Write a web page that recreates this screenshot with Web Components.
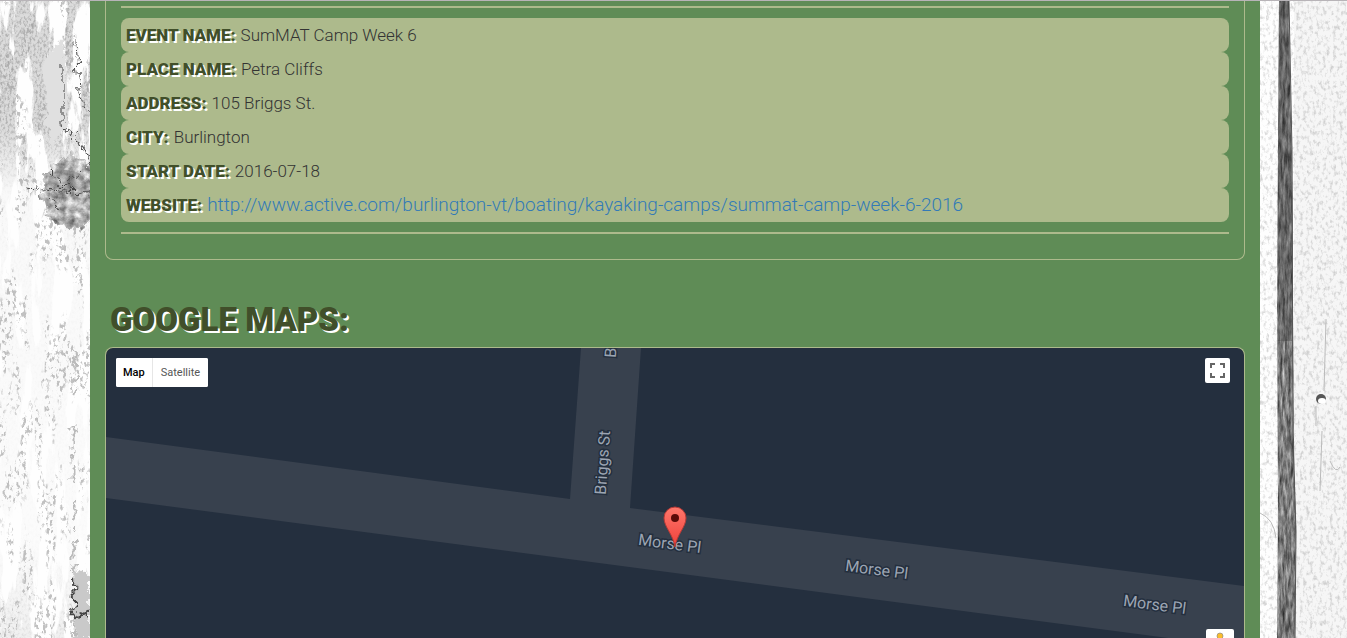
<!DOCTYPE html>
<html lang="en">
<head>
<meta charset="utf-8">
<title>SumMAT Camp Week 6</title>
<style>
html, body { margin: 0; height: 100%; overflow: hidden; }
body { font-family: Roboto, "Open Sans", sans-serif; color: #333; background: #fdfdfd; }
</style>
</head>
<body>
<camp-page>
  <event-details>
    <event-field label="Event Name:">SumMAT Camp Week 6</event-field>
    <event-field label="Place Name:">Petra Cliffs</event-field>
    <event-field label="Address:">105 Briggs St.</event-field>
    <event-field label="City:">Burlington</event-field>
    <event-field label="Start Date:">2016-07-18</event-field>
    <event-field label="Website:" href="http://www.active.com/burlington-vt/boating/kayaking-camps/summat-camp-week-6-2016"></event-field>
  </event-details>
  <section-title>Google Maps:</section-title>
  <street-map></street-map>
</camp-page>

<script>
const define = (name, html, setup) => {
  const template = document.createElement('template');
  template.innerHTML = html;
  customElements.define(name, class extends HTMLElement {
    constructor() {
      super();
      this.attachShadow({ mode: 'open' }).append(template.content.cloneNode(true));
    }
    connectedCallback() { if (setup) setup(this, this.shadowRoot); }
  });
};

define('wood-plank', `
<style>
:host { display: block; overflow: hidden; background: #fefefe; }
svg { display: block; width: 100%; height: 100%; }
:host([side="left"]) .right, :host([side="right"]) .left { display: none; }
</style>
<svg class="left" viewBox="0 0 90 638" preserveAspectRatio="xMinYMin slice" aria-hidden="true">
  <defs>
    <filter id="grain" x="0" y="0" width="100%" height="100%" color-interpolation-filters="sRGB">
      <feTurbulence type="fractalNoise" baseFrequency=".06 .012" numOctaves="6" seed="8" result="t"/>
      <feColorMatrix in="t" values="0 0 0 0 .86  0 0 0 0 .86  0 0 0 0 .86  0 16 0 0 -7.2" result="patch"/>
      <feTurbulence type="fractalNoise" baseFrequency=".5 .3" numOctaves="3" seed="2"/>
      <feColorMatrix values="0 0 0 0 .7  0 0 0 0 .7  0 0 0 0 .7  0 3 0 0 -1.3"/>
      <feComposite in2="patch" operator="atop"/>
    </filter>
    <filter id="flakes" x="0" y="0" width="100%" height="100%" color-interpolation-filters="sRGB">
      <feTurbulence type="fractalNoise" baseFrequency=".07 .015" numOctaves="3" seed="31"/>
      <feColorMatrix values="0 0 0 0 0  0 0 0 0 0  0 0 0 0 0  0 10 0 0 -4.9" result="area"/>
      <feTurbulence type="fractalNoise" baseFrequency=".3 .18" numOctaves="5" seed="21"/>
      <feColorMatrix values="0 0 0 0 .6  0 0 0 0 .6  0 0 0 0 .6  0 7 0 0 -3.7"/>
      <feComposite in2="area" operator="in"/>
    </filter>
    <filter id="rough" x="-20%" y="-20%" width="140%" height="140%">
      <feTurbulence type="fractalNoise" baseFrequency=".12" numOctaves="4" seed="3" result="n"/>
      <feDisplacementMap in="SourceGraphic" in2="n" scale="14" xChannelSelector="R" yChannelSelector="G"/>
    </filter>
    <filter id="knot" x="-20%" y="-20%" width="140%" height="140%" color-interpolation-filters="sRGB">
      <feTurbulence type="fractalNoise" baseFrequency=".12" numOctaves="5" seed="13" result="n"/>
      <feColorMatrix in="n" values="0 .9 0 0 .24  0 .9 0 0 .24  0 .9 0 0 .24  0 0 0 0 1" result="g"/>
      <feDisplacementMap in="SourceGraphic" in2="n" scale="16" xChannelSelector="R" yChannelSelector="G" result="d"/>
      <feComposite in="g" in2="d" operator="in"/>
    </filter>
    <linearGradient id="fade" x2="0" y2="1">
      <stop offset="0" stop-color="#fff"/><stop offset=".2" stop-color="#fff"/>
      <stop offset=".3" stop-color="#222"/><stop offset=".85" stop-color="#111"/><stop offset="1" stop-color="#666"/>
    </linearGradient>
    <mask id="m"><rect width="90" height="638" fill="url(#fade)"/></mask>
  </defs>
  <g mask="url(#m)"><rect width="90" height="638" filter="url(#grain)"/></g>
  <rect width="90" height="638" filter="url(#flakes)" opacity=".6"/>
  <g filter="url(#rough)">
    <path d="M44 60 60 40 66 60 68 125 52 145 46 120Z" fill="#e0e0e0"/>
    <path d="M74 565l16 12v61H76Z" fill="#c9c9c9"/>
  </g>
  <ellipse cx="72" cy="192" rx="30" ry="36" fill="#999" filter="url(#knot)"/>
  <ellipse cx="66" cy="180" rx="18" ry="11" fill="#666" opacity=".3"/>
  <g filter="url(#rough)" fill="none" stroke="#444">
    <path d="M30 186 60 190 90 191M50 170 65 186 80 172M50 195l8 14M62 62v60l8 14M76 40l3 50 11 26M76 130l14 34"/>
    <path d="M74 350l3 24-2 20M74 425v60M74 500v138" stroke="#bbb" stroke-width="3" stroke-dasharray="18 7 5 9"/>
    <path d="M73 580l2 40M76 616l10-4 4 3" stroke-width="2"/>
  </g>
</svg>
<svg class="right" viewBox="0 0 87 638" preserveAspectRatio="xMinYMin slice" aria-hidden="true">
  <defs>
    <filter id="speck" x="0" y="0" width="100%" height="100%" color-interpolation-filters="sRGB">
      <feTurbulence type="fractalNoise" baseFrequency=".3 .2" numOctaves="4" seed="5"/>
      <feColorMatrix values="0 0 0 0 .72  0 0 0 0 .72  0 0 0 0 .72  0 3 0 0 -1.45"/>
    </filter>
    <filter id="fibre" x="0" y="0" width="100%" height="100%" color-interpolation-filters="sRGB">
      <feTurbulence type="fractalNoise" baseFrequency=".35 .06" numOctaves="5" seed="9"/>
      <feColorMatrix values="0 .8 0 0 .08  0 .8 0 0 .08  0 .8 0 0 .08  0 0 0 0 1"/>
      <feComposite in2="SourceGraphic" operator="in"/>
    </filter>
  </defs>
  <rect x="34" width="53" height="638" fill="#f2f2f2" opacity=".7"/>
  <rect width="87" height="638" filter="url(#speck)" opacity=".6"/>
  <path d="M19 0H29L30 80 32 150 33 320 34 440 36 530 35 638H17L18 500 17 300 18 140Z" filter="url(#fibre)"/>
  <path d="M19 0H29L31 130 33 220 32 340H18L18 140Z" fill="#333" opacity=".3"/>
  <path d="M29 0 32 150 33 440 36 530 35 638" fill="none" stroke="#555"/>
  <path d="M66 318 64 390M56 405v20M62 430l-2 60M0 512q14 6 16 25M70 460q6 14 10 6" fill="none" stroke="#bbb"/>
  <circle cx="61" cy="398" r="5" fill="#555"/>
  <ellipse cx="62" cy="400" rx="4" ry="3" fill="#fff"/>
</svg>`);

define('camp-page', `
<style>
:host { display: grid; grid-template-columns: 90px minmax(0, 1fr) 87px; height: 100%; box-sizing: border-box; border-top: 1px solid #b8b4b8; }
main { display: flex; flex-direction: column; min-height: 0; padding: 0 15px; background: #5f8c56; }
</style>
<wood-plank side="left"></wood-plank>
<main><slot></slot></main>
<wood-plank side="right"></wood-plank>`);

define('event-details', `
<style>
:host { display: block; padding: 5px 15px 25px; border: 1px solid #adba8c; border-top: 0; border-radius: 0 0 8px 8px; }
hr { height: 2px; margin: 0; border: 0; background: #adba8c; }
.fields { padding: 10px 0; }
</style>
<hr><div class="fields"><slot></slot></div><hr>`);

define('event-field', `
<style>
:host { display: flex; align-items: center; gap: 5px; box-sizing: border-box; height: 34px; padding: 0 5px; border-radius: 8px; background: #adba8c; font-size: 17px; font-weight: 300; line-height: 34px; white-space: nowrap; }
.label { font-weight: 900; text-transform: uppercase; color: #414f2a; text-shadow: 2px 2px #fff; }
a { font-size: 19px; color: #337ab7; text-decoration: none; }
</style>
<span class="label"></span><span class="value"><slot></slot></span>`, (el, root) => {
  root.querySelector('.label').textContent = el.getAttribute('label');
  const href = el.getAttribute('href');
  if (href) {
    const a = document.createElement('a');
    a.href = a.textContent = href;
    root.querySelector('.value').replaceChildren(a);
  }
});

define('section-title', `
<style>
:host { display: block; margin-top: 36px; padding: 0 5px 4px; }
h2 { margin: 0; font: 900 33px/47px Roboto, sans-serif; text-transform: uppercase; color: #414f2a; text-shadow: 2px 2px #fff; white-space: nowrap; }
</style>
<h2><slot></slot></h2>`);

define('map-type', `
<style>
:host { display: flex; height: 29px; border-radius: 2px; overflow: hidden; background: #fff; }
button { border: 0; margin: 0; padding: 0 8px; background: #fff; font: 400 11px/29px Roboto, sans-serif; color: #565656; }
button[aria-pressed="true"] { padding: 0 7px; border-right: 1px solid #e6e6e6; font-weight: 500; color: #000; }
</style>
<button type="button" aria-pressed="true">Map</button><button type="button" aria-pressed="false">Satellite</button>`);

define('street-map', `
<style>
:host { display: block; position: relative; flex: 1; min-height: 0; overflow: hidden; border: 1px solid #adba8c; border-bottom: 0; border-radius: 8px 8px 0 0; background: #242f3e; }
.canvas { display: block; width: 100%; height: 100%; }
text { font: 400 16px Roboto, sans-serif; fill: #9ca5b3; stroke: #242f3e; stroke-width: 3px; paint-order: stroke; text-anchor: middle; }
map-type { position: absolute; left: 10px; top: 10px; }
.tool { position: absolute; right: 14px; top: 10px; width: 25px; height: 25px; padding: 0; border: 0; border-radius: 2px; background: #fff; }
.pegman { top: auto; right: 10px; bottom: -19px; width: 28px; height: 28px; }
.tool svg { display: block; margin: auto; }
</style>
<svg class="canvas" viewBox="0 0 1138 290" preserveAspectRatio="xMidYMin slice" role="img" aria-label="Street map">
  <defs><linearGradient id="pin" x2="0" y2="1"><stop offset="0" stop-color="#ff776b"/><stop offset="1" stop-color="#f0403a"/></linearGradient></defs>
  <path d="M0 89 464 151 475 0H535L524 160 1138 238V300L0 150Z" fill="#38414e"/>
  <text transform="translate(502 115) rotate(-86)">Briggs St</text>
  <text transform="translate(512 -22) rotate(-86)">Briggs St</text>
  <text transform="translate(563 201) rotate(7.5)">Morse Pl</text>
  <text transform="translate(770 227) rotate(7.5)">Morse Pl</text>
  <text transform="translate(1048 262) rotate(7.5)">Morse Pl</text>
  <path d="M569 199C567 186 558 179 558 170A11 11 0 0 1 580 170C580 179 571 186 569 199Z" fill="url(#pin)" stroke="#b53a36"/>
  <circle cx="569" cy="170" r="4" fill="#5c0b08"/>
</svg>
<map-type></map-type>
<button class="tool" type="button" aria-label="Full screen"><svg width="15" height="15" viewBox="0 0 15 15"><path d="M1 5V1H5M10 1H14V5M14 10V14H10M5 14H1V10" fill="none" stroke="#666" stroke-width="2"/></svg></button>
<button class="tool pegman" type="button" aria-label="Street View"><svg width="20" height="22" viewBox="0 0 20 22"><circle cx="10" cy="4" r="3" fill="#fbbd2c" stroke="#8e8b80" stroke-width=".7"/><path d="M6 8h8v6h-1v7H7v-7H6Z" fill="#fbbd2c"/></svg></button>`);
</script>
</body>
</html>
